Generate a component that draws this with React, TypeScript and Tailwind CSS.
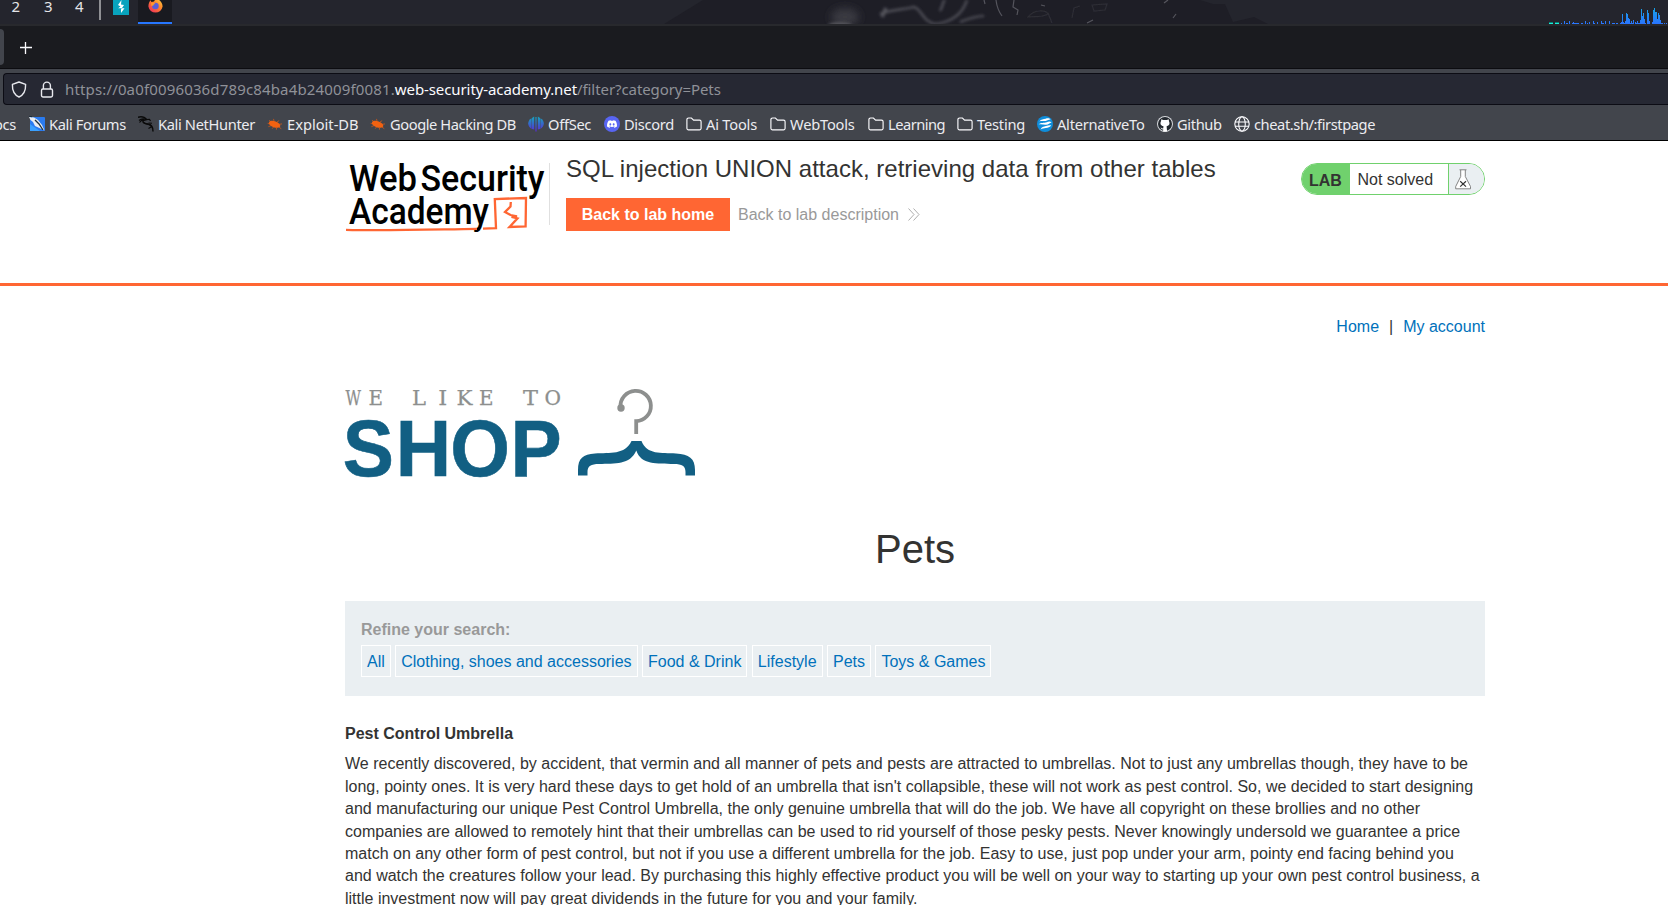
import type { ReactNode } from "react";
import { SiDiscord } from "react-icons/si";

const KaliForumsIcon = () => (
  <svg width="16" height="16" viewBox="0 0 16 16">
    <rect x="1" y="1" width="15" height="14" rx="1" fill="#2a7bf0" />
    <path d="M1 8 L1 15 H11 Z" fill="#3aa0ff" />
    <path d="M0 1 L5 1.5 L9 4 L13 9 L15.5 14.5 L11.5 12.5 L6 10 L4 6 L1.5 4 Z" fill="#e9edf2" />
    <path d="M6 4 L10 8 L14 14 M0 0 L3 0.5" stroke="#1b2d3a" strokeWidth="1.3" fill="none" />
  </svg>
);

const NetHunterIcon = () => (
  <svg width="16" height="16" viewBox="0 0 16 16" fill="none" stroke="#0a0a0a">
    <path d="M0 1.2 C4 0.2 7 1.5 8.5 3.5 L5 4.5 C4.5 7 7 7.6 10 8 C13 8.4 15 10.5 15 15.5" strokeWidth="1.5" />
    <path d="M1 4.5 C3 2.5 5.5 2.4 8 3.3 M1.5 6.5 C3 4.2 4 3.6 6 3.6 M8.5 3.5 L11.5 3.4 L12.5 5" strokeWidth="1.2" />
    <path d="M6 6.5 C7 8 9 8 11 8.6 C12.5 9 13.5 10 13.8 11.4 M10.5 7 L14 7.2 M13 11 L10.5 12.5" strokeWidth="1.1" />
  </svg>
);

const ExploitIcon = () => (
  <svg width="16" height="16" viewBox="0 0 16 16">
    <path
      d="M4 6 L2.2 4 M7 5 L6.5 2.9 M10 6 L12.2 4.6 M12 8.4 L15 7.9 M3 8 L0.6 7.3 M4 9.6 L1.4 10.7 M6.5 11 L5.2 12.7 M9.5 12 L9.4 13.7 M12 11.2 L14.3 12.7"
      stroke="#cf5818"
      strokeWidth="0.8"
      fill="none"
    />
    <ellipse cx="7.6" cy="8.3" rx="6" ry="3.1" transform="rotate(20 7.6 8.3)" fill="#f26211" />
  </svg>
);

const OffSecIcon = () => (
  <svg width="16" height="16" viewBox="0 0 16 16">
    <defs>
      <linearGradient id="offsec" gradientUnits="userSpaceOnUse" x1="0" y1="0" x2="0" y2="16">
        <stop offset="0" stopColor="#12a9bd" />
        <stop offset="1" stopColor="#5b25d8" />
      </linearGradient>
    </defs>
    <g fill="url(#offsec)">
      <path d="M3.6 2.2 V13 C1.4 11.8 0.2 9.8 0.2 7.6 C0.2 5.4 1.4 3.4 3.6 2.2 Z" />
      <path d="M4 2 L6.2 0.5 V13.4 L4 13 Z" />
      <path d="M7.4 1 H8.6 V15.6 H7.4 Z" />
      <path d="M9.8 0.5 L12 2 V13 L9.8 13.4 Z" />
      <path d="M12.4 2.2 V13 C14.6 11.8 15.8 9.8 15.8 7.6 C15.8 5.4 14.6 3.4 12.4 2.2 Z" />
    </g>
  </svg>
);

const DiscordIcon = () => (
  <span className="flex h-4 w-4 items-center justify-center rounded-full bg-[#5865f2] text-white">
    <SiDiscord size={10} />
  </span>
);

const FolderIcon = () => (
  <svg width="16" height="16" viewBox="0 0 16 16" fill="none" stroke="#fbfbfe" strokeWidth="1.15">
    <path d="M0.9 12.3 V3.6 A1.6 1.6 0 0 1 2.5 2 H5.4 L7.6 4.1 H13.5 A1.6 1.6 0 0 1 15.1 5.7 V12.3 A1.6 1.6 0 0 1 13.5 13.9 H2.5 A1.6 1.6 0 0 1 0.9 12.3 Z" />
  </svg>
);

const AlternativeIcon = () => (
  <svg width="16" height="16" viewBox="0 0 16 16">
    <circle cx="8" cy="8" r="8" fill="#0f8ddb" />
    <path d="M2.4 5.4 C4 3 6.6 3.4 8.6 2.8 C10.6 2 12.6 2.2 13.6 3.6 C11.6 3.4 11 4.6 8.6 5 C6.4 5.2 4.4 4.4 2.4 5.4 Z" fill="#fff" />
    <path d="M1.6 8.6 C4 6 7 7.4 9.8 6.2 C11.6 5.4 13 5.2 14.6 6.4 C12.6 6.8 11.6 8.6 9 8.8 C6.6 9 4 7.6 1.6 8.6 Z" fill="#fff" />
    <path d="M3.6 13.6 C4.2 11 6.6 10.6 9 10 C11 9.4 12.6 8.8 14.2 9.4 C13 11 11 11.4 8.8 12 C7 12.4 5.2 12.2 3.6 13.6 Z" fill="#fff" />
  </svg>
);

const GithubIcon = () => (
  <span className="flex h-4 w-4 items-center justify-center rounded-full bg-[#24292f] ring-1 ring-[#d8dade] ring-inset">
    <svg width="16" height="16" viewBox="0 0 16 16" fill="#fff">
      <path d="M4.3 3.2 L6.2 4 H9.8 L11.7 3.2 L12 5.3 C13.2 7.6 12.4 9.8 9.6 10.3 L10.1 15.4 H6 L6.3 13.4 C4.6 13.8 4.2 12.4 3.4 11.8 C4.6 11.7 4.8 12.8 6.2 12.4 L6.5 10.3 C3.6 9.8 2.8 7.6 4 5.3 Z" />
    </svg>
  </span>
);

const GlobeIcon = () => (
  <svg width="16" height="16" viewBox="0 0 16 16" fill="none" stroke="#fbfbfe" strokeWidth="1.1">
    <circle cx="8" cy="8" r="7.2" />
    <ellipse cx="8" cy="8" rx="3.3" ry="7.2" />
    <path d="M1 6 H15 M1 10.2 H15" />
  </svg>
);

type Bookmark = { label: string; icon: ReactNode; box: string };

const bookmarks: Bookmark[] = [
  { label: "Kali Forums", icon: <KaliForumsIcon />, box: "w-[109px] tracking-[-0.38px]" },
  { label: "Kali NetHunter", icon: <NetHunterIcon />, box: "w-[129px] tracking-[-0.36px]" },
  { label: "Exploit-DB", icon: <ExploitIcon />, box: "w-[103px] tracking-[0px]" },
  { label: "Google Hacking DB", icon: <ExploitIcon />, box: "w-[158px] tracking-[-0.42px]" },
  { label: "OffSec", icon: <OffSecIcon />, box: "w-[76px] tracking-[-0.3px]" },
  { label: "Discord", icon: <DiscordIcon />, box: "w-[82px] tracking-[-0.33px]" },
  { label: "Ai Tools", icon: <FolderIcon />, box: "w-[84px] tracking-[-0.2px]" },
  { label: "WebTools", icon: <FolderIcon />, box: "w-[98px] tracking-[-0.2px]" },
  { label: "Learning", icon: <FolderIcon />, box: "w-[89px] tracking-[-0.5px]" },
  { label: "Testing", icon: <FolderIcon />, box: "w-[80px] tracking-[-0.2px]" },
  { label: "AlternativeTo", icon: <AlternativeIcon />, box: "w-[120px] tracking-[-0.25px]" },
  { label: "Github", icon: <GithubIcon />, box: "w-[77px] tracking-[-0.36px]" },
  { label: "cheat.sh/:firstpage", icon: <GlobeIcon />, box: "w-[160px] tracking-[-0.42px]" },
];

/* [x offset, width, height] of each spike in the network graph */
const spikes = [
  [12, 1, 1], [15, 1, 3], [17, 2, 1], [20, 1, 3], [23, 7, 1], [24, 1, 2], [32, 2, 1], [36, 1, 3], [38, 1, 1], [40, 1, 2],
  [44, 1, 3], [45, 1, 1], [48, 1, 2], [52, 1, 3], [53, 2, 1], [56, 1, 3], [60, 1, 3], [63, 3, 1], [67, 2, 1],
  [71, 1, 1], [72, 1, 2], [73, 1, 10], [74, 1, 2], [75, 1, 1], [76, 1, 3], [77, 1, 11], [78, 1, 10], [79, 1, 6],
  [80, 1, 5], [81, 1, 1], [82, 1, 3], [83, 1, 1], [84, 1, 4], [86, 1, 2], [87, 1, 1], [88, 1, 3], [89, 2, 1],
  [91, 1, 4], [92, 1, 15], [93, 1, 8], [94, 1, 11], [95, 1, 5], [96, 1, 1], [98, 1, 14], [99, 1, 11], [100, 1, 3],
  [103, 1, 2], [104, 1, 14], [105, 1, 16], [106, 2, 12], [108, 1, 5], [109, 1, 11], [110, 1, 9], [111, 1, 4],
  [112, 2, 1], [115, 1, 1], [117, 1, 1],
];

const NetGraph = () => (
  <svg width="120" height="24" viewBox="0 0 120 24" shapeRendering="crispEdges">
    <defs>
      <linearGradient id="net" gradientUnits="userSpaceOnUse" x1="0" y1="8" x2="0" y2="24">
        <stop offset="0" stopColor="#16a3e8" />
        <stop offset="1" stopColor="#2a74ff" />
      </linearGradient>
    </defs>
    <path d="M0 22 h4 v1 h-4 z M6 22 h4 v1 h-4 z" fill="#0b7c74" />
    <path d="M0 23 h4 v1 h-4 z M6 23 h4 v1 h-4 z" fill="#19f0d8" />
    {spikes.map(([x, w, h]) => (
      <rect key={x} x={x} y={24 - h} width={w} height={h} fill="url(#net)" />
    ))}
  </svg>
);

const Wallpaper = () => (
  <svg width="646" height="24" viewBox="0 0 646 24" fill="none">
    <defs>
      <filter id="soft" x="-50%" y="-50%" width="200%" height="200%"><feGaussianBlur stdDeviation="1.7" /></filter>
      <filter id="haze" x="-50%" y="-50%" width="200%" height="200%"><feGaussianBlur stdDeviation="4" /></filter>
      <filter id="crisp" x="-50%" y="-50%" width="200%" height="200%"><feGaussianBlur stdDeviation="0.6" /></filter>
    </defs>
    <path d="M0 24 L39 0 H536 L549 4 L561 4 L569 22 L590 17 L604 24 Z" fill="#1e1e26" />
    <ellipse cx="181" cy="17" rx="14" ry="9" fill="#3a3a42" filter="url(#haze)" />
    <ellipse cx="176" cy="25" rx="12" ry="3" fill="#55555c" filter="url(#soft)" />
    <g stroke="#55555d" strokeWidth="2.2" filter="url(#soft)">
      <path d="M216 14 C228 9 238 10 250 7 C258 9 258 22 272 24 M276 11 C280 4 278 2 281 0" />
      <path d="M272 24 C286 22 298 16 303 0 M296 22 C306 18 314 16 320 16" />
      <path d="M218 17 L222 8" strokeWidth="3.4" />
    </g>
    <g stroke="#54545c" strokeWidth="1.2" filter="url(#crisp)">
      <path d="M332 0 C333 8 335 12 338 16 M350 0 L349 7 L354 10 L353 15 M320 0 L321 4 M423 23 L429 20 M512 14 L509 18 M500 3 L504 0 M377 5 L381 6" />
      <path d="M364 17 C370 9 382 10 384 14 C378 18 370 16 364 17 Z M384 13 L388 23 M408 18 L410 8 L416 6 M428 5 L443 4 L441 10 L430 11 Z" stroke="#2d2d35" />
    </g>
  </svg>
);

const WebSecurityLogo = () => (
  <svg width="204" height="76" viewBox="0 0 204 76">
    <g fontFamily="Roboto, sans-serif" fontWeight="500" fontSize="37.5" fill="#000">
      <text x="4" y="32.2" textLength="68" lengthAdjust="spacingAndGlyphs">Web</text>
      <text x="75.5" y="32.2" textLength="124" lengthAdjust="spacingAndGlyphs">Security</text>
      <text x="4" y="65" textLength="140" lengthAdjust="spacingAndGlyphs">Academy</text>
    </g>
    <g fill="none" stroke="#ff6633">
      <path d="M1 70.8 C40 71.8 80 70.6 132 69.8 M138 69.6 L151 69.2 L149.8 40 L181 39 L180.6 67.4 L164.5 68 L172.5 59.4 L166.5 58 L172 57.4 L165.5 56 L160 53 L165.5 47.5 L165.8 43" strokeWidth="2.3" />
    </g>
  </svg>
);

/* glyph, x, width */
const tagline: [string, number, number][] = [
  ["W", 0.5, 15.5],
  ["E", 23.6, 14.5],
  ["L", 67, 14],
  ["I", 93.3, 9],
  ["K", 111.4, 16],
  ["E", 134, 14.5],
  ["T", 178, 15],
  ["O", 199.6, 16.5],
];

const ShopLogo = () => (
  <svg className="overflow-visible" width="352" height="92" viewBox="0 0 352 92">
    <g className="font-['DejaVu_Serif',serif]" fontSize="20.5" fill="#8d8f8e" stroke="#8d8f8e" strokeWidth="0.25">
      {tagline.map(([glyph, x, width]) => (
        <text key={x} x={x} y="17.8" textLength={width} lengthAdjust="spacingAndGlyphs">{glyph}</text>
      ))}
    </g>
    <g transform="scale(0.965 1)" fontFamily="'Liberation Sans', sans-serif" fontWeight="700" fontSize="79.5" fill="#125f83" stroke="#125f83" strokeWidth="0.6">
      <text x="-2.4 52.5 109.2 171.6" y="88.8">SHOP</text>
    </g>
    <path d="M275.5 20 A15.2 15.2 0 1 1 291.2 34.2 V47" fill="none" stroke="#8d8f8e" strokeWidth="3.8" />
    <circle cx="276" cy="21" r="3.7" fill="#8d8f8e" />
    <path d="M233 88.6 V83 C233 71 238 67.5 250 66.5 C265 65.5 280 68 286.5 54 H296.5 C302 68 316 65.5 331 66.5 C344 67.5 350 71 350 83 V88.6 H340.5 V85 C340.5 79 337 77 329 77 C312 76.5 296 78 291.3 63.5 C285 78 270 76.5 254 77 C246 77 242.5 79 242.5 85 V88.6 Z" fill="#125f83" />
  </svg>
);

const FirefoxIcon = () => (
  <svg width="15" height="16" viewBox="0 0 15 16">
    <defs>
      <linearGradient id="fox" x1="1" y1="0" x2="0.2" y2="1">
        <stop offset="0" stopColor="#ffe04a" />
        <stop offset="0.45" stopColor="#ff8a2a" />
        <stop offset="1" stopColor="#f0305a" />
      </linearGradient>
    </defs>
    <path d="M9 0 C11 2 14.6 4 14.6 8.6 A7.2 7.2 0 0 1 0.4 8.6 C0.4 5.5 1.5 3.5 2.6 2.2 L3.4 4 L6 3.4 C6.4 2 8 1.5 9 0 Z" fill="url(#fox)" />
    <circle cx="7.4" cy="8" r="3.3" fill="#5a5fd8" />
    <path d="M3 5 C5 4.4 6.4 4.8 7.4 6 C6 6 5.4 6.6 5.4 7.4 L3.4 8 Z" fill="#ff9a2e" />
  </svg>
);

const FlaskIcon = () => (
  <svg width="16" height="21" viewBox="0 0 16 21" fill="none">
    <path d="M5.5 1 V7.5 L0.8 17.5 V20 H15.6 V17.5 L10.5 7.5 V1 Z" fill="#fff" />
    <path d="M4.5 0.8 H11.5 M5.7 1 V7.5 L0.7 17.5 V19.8 H15.5 V17.5 L10.3 7.5 V1" stroke="#777" strokeWidth="0.9" />
    <path d="M5.2 12.2 L11 17.6 M11 12.2 L5.2 17.6" stroke="#333" strokeWidth="1.2" />
  </svg>
);

const categories = ["All", "Clothing, shoes and accessories", "Food & Drink", "Lifestyle", "Pets", "Toys & Games"];

const description = [
  "We recently discovered, by accident, that vermin and all manner of pets and pests are attracted to umbrellas. Not to just any umbrellas though, they have to be",
  "long, pointy ones. It is very hard these days to get hold of an umbrella that isn't collapsible, these will not work as pest control. So, we decided to start designing",
  "and manufacturing our unique Pest Control Umbrella, the only genuine umbrella that will do the job. We have all copyright on these brollies and no other",
  "companies are allowed to remotely hint that their umbrellas can be used to rid yourself of those pesky pests. Never knowingly undersold we guarantee a price",
  "match on any other form of pest control, but not if you use a different umbrella for the job. Easy to use, just pop under your arm, pointy end facing behind you",
  "and watch the creatures follow your lead. By purchasing this highly effective product you will be well on your way to starting up your own pest control business, a",
  "little investment now will pay great dividends in the future for you and your family.",
];

const DesktopPanel = () => (
  <div className="flex h-6 shrink-0 items-start overflow-hidden bg-[#24252d] text-[15px] leading-[13px] text-[#e4e5e8]">
    <span className="ml-[11.5px] w-[32.5px]">2</span>
    <span className="w-[31px]">3</span>
    <span className="w-6">4</span>
    <span className="h-5 w-0.5 bg-[#8f9094]" />
    <span className="ml-3 flex h-[15px] w-4 items-start justify-center bg-[#08a3bd]">
      <svg width="10" height="14" viewBox="0 0 10 14" fill="#fff">
        <path d="M5.5 0 L2 5 L4.5 6.5 L2.2 8.2 H8.5 L5 13 V9.5 L8 5 L5 4.6 Z" />
      </svg>
    </span>
    <span className="ml-[9px] flex h-6 w-[34px] justify-center border-b-2 border-[#2777ff] bg-[#191a20]">
      <span className="-mt-0.5"><FirefoxIcon /></span>
    </span>
    <span className="ml-[492px]"><Wallpaper /></span>
    <span className="ml-auto mr-[-1px]"><NetGraph /></span>
  </div>
);

const BrowserChrome = () => (
  <div className="shrink-0">
    <div className="flex h-[45px] items-start border-t-2 border-b border-t-[#28292d] border-b-[#0c0c10] bg-[#1a1b1f]">
      <span className="mt-[3px] h-9 w-1 rounded-r bg-[#42454c]" />
      <svg className="mt-[16px] ml-4" width="12" height="12" viewBox="0 0 12 12" stroke="#fbfbfe" strokeWidth="1.3">
        <path d="M5.5 0 V12 M0 5.5 H12" />
      </svg>
    </div>
    <div className="h-[71px] bg-[#42454c] pt-1">
      <div className="ml-[3px] flex h-8 items-center rounded-l border border-r-0 border-[#0c0c14] bg-[#262833] text-[15px] whitespace-pre">
        <svg className="ml-[7px]" width="16" height="17" viewBox="0 0 16 17" fill="none" stroke="#e8e9ee" strokeWidth="1.4">
          <path d="M8 1 L14.6 3.4 C14.8 9 13.4 13.4 8 16 C2.6 13.4 1.2 9 1.4 3.4 Z" strokeLinejoin="round" />
        </svg>
        <svg className="ml-3" width="16" height="17" viewBox="0 0 16 17" fill="none" stroke="#e8e9ee" strokeWidth="1.4">
          <rect x="2.5" y="8" width="11" height="8" rx="1.4" />
          <path d="M4.4 8 V4.6 A3.5 3.5 0 0 1 11.4 4.6 V8" />
        </svg>
        <span className="ml-2.5 tracking-[0.15px] text-[#8f9198]">https://0a0f0096036d789c84ba4b24009f0081.</span>
        <span className="tracking-[-0.09px] text-[#fbfbfe]">web-security-academy.net</span>
        <span className="tracking-[-0.08px] text-[#8f9198]">/filter?category=Pets</span>
      </div>
      <div className="flex h-[35px] items-center overflow-hidden pt-[3px] text-[14.67px] leading-5 whitespace-nowrap text-[#ececf0]">
        <span className="ml-[-6px] w-[35px] shrink-0 tracking-[-0.33px]">ocs</span>
        {bookmarks.map((b) => (
          <span key={b.label} className={`flex shrink-0 items-center gap-1 ${b.box}`}>
            <span className="shrink-0">{b.icon}</span>
            {b.label}
          </span>
        ))}
      </div>
    </div>
    <div className="h-px bg-black" />
  </div>
);

const LabHeader = () => (
  <header className="flex h-[145px] border-b-[3px] border-[#ff6633] pl-[345px]">
    <div className="mt-[18px]"><WebSecurityLogo /></div>
    <div className="mt-[22px] h-[62px] w-px bg-[#e0e0e0]" />
    <div className="ml-4 w-[735px] pt-[14px]">
      <h2 className="text-2xl leading-7 tracking-[0.015px]">SQL injection UNION attack, retrieving data from other tables</h2>
      <div className="mt-[15px] flex items-center">
        <a className="flex h-[33px] w-[164px] items-center justify-center bg-[#ff6633] pt-px font-bold text-white">Back to lab home</a>
        <a className="ml-2 pt-px text-[#999]">Back to lab description</a>
        <svg className="ml-[9px]" width="12" height="13" viewBox="0 0 12 13" fill="none" stroke="#999" strokeWidth="0.8">
          <path d="M0.5 0.5 L6 6.5 L0.5 12.5 M5.5 0.5 L11 6.5 L5.5 12.5" />
        </svg>
      </div>
    </div>
    <div className="mt-[22px] flex h-8 w-[184px] overflow-hidden rounded-full border border-[#70d16d] bg-white">
      <span className="flex w-[48px] items-center bg-[#70d16d] pt-[4px] pl-[7px] font-bold">LAB</span>
      <span className="flex w-[99px] items-center border-r border-[#70d16d] pt-[2px] pl-[7.5px]">Not solved</span>
      <span className="flex flex-1 items-center bg-[#eaeff2] pl-1.5"><FlaskIcon /></span>
    </div>
  </header>
);

export default function App() {
  return (
    <div className="flex h-[905px] w-[1668px] flex-col overflow-hidden bg-white font-['Noto_Sans',sans-serif]">
      <DesktopPanel />
      <BrowserChrome />
      <main className="flex-1 overflow-hidden font-['Liberation_Sans',Arial,sans-serif] text-base leading-[22.4px] text-[#333332]">
        <LabHeader />
        <div className="ml-[345px] w-[1140px]">
          <nav className="flex justify-end pt-[30px]">
            <a className="text-[#0071bb]">Home</a>
            <span className="mx-[10px]">|</span>
            <a className="text-[#0071bb]">My account</a>
          </nav>
          <div className="mt-[49px]"><ShopLogo /></div>
          <h1 className="mt-[42px] text-center text-[40px] leading-[56px]">Pets</h1>
          <section className="mt-[24px] h-[95px] bg-[#eaeff2] px-4 pt-[18px]">
            <p className="font-bold text-[#999]">Refine your search:</p>
            <div className="mt-[3.6px] flex gap-[4.45px]">
              {categories.map((c) => (
                <a key={c} className="flex h-8 items-center border border-white px-[5px] pt-px text-[#0071bb]">{c}</a>
              ))}
            </div>
          </section>
          <h3 className="mt-[27px] font-bold">Pest Control Umbrella</h3>
          <p className="mt-[7.6px] whitespace-nowrap">
            {description.map((line) => (
              <span key={line} className="block">{line}</span>
            ))}
          </p>
        </div>
      </main>
    </div>
  );
}
